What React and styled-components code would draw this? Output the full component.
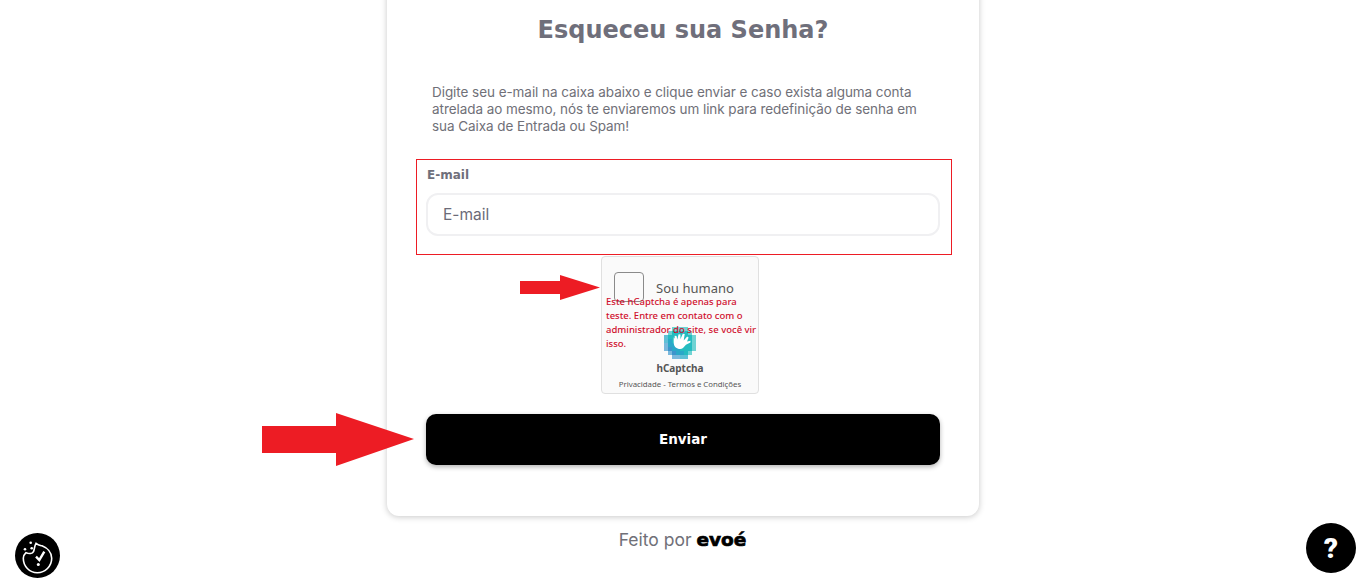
import React from "react";
import styled, { createGlobalStyle } from "styled-components";

const Global = createGlobalStyle`
  html, body { margin: 0; padding: 0; background: #fff; height: 580px; overflow: hidden; }
  * { box-sizing: border-box; }
`;
const Page = styled.div`
  position: relative; width: 1365px; height: 580px; overflow: hidden;
  display: flex; flex-direction: column; align-items: center;
  font-family: "Inter", "Liberation Sans", sans-serif; color: #6b6b76;
`;
const Card = styled.main`
  width: 592px; height: 536px; margin-top: -20px; margin-left: 1px; flex: none;
  background: #fff; border-radius: 12px;
  box-shadow: 0 1px 6px rgba(0,0,0,.22);
  padding: 32px 39px 0;
  display: flex; flex-direction: column; align-items: center;
`;
const Title = styled.h1`
  margin: 0; font-family: "DejaVu Sans", sans-serif; font-weight: 700; font-size: 24px;
  line-height: 36px; color: #6f6f7b; white-space: nowrap;
`;
const Intro = styled.p`
  margin: 36px 0 0 6px; width: 500px; align-self: flex-start;
  font-size: 13.5px; line-height: 17px; color: #707078; letter-spacing: -.06px;
`;
const FieldBox = styled.div`
  width: 536px; height: 96px; margin: 24px 0 0 2px; border: 1px solid #ed1c24;
  padding: 8px 10px 0 9px; flex: none;
`;
const Label = styled.label`
  display: block; margin-left: 1px; font-family: "DejaVu Sans", sans-serif; font-size: 12px; font-weight: 700;
  line-height: 14px; color: #6f6f7b;
`;
const Input = styled.input`
  display: block; width: 514px; height: 43px; margin-top: 11px; padding: 0 15px;
  border: 2px solid #f0f0f2; border-radius: 12px; background: #fff;
  font: 400 15.5px "Inter", sans-serif; outline: none;
  &::placeholder { color: #6b6b78; opacity: 1; }
`;
const Captcha = styled.div`
  position: relative; width: 158px; height: 138px; margin: 1px 0 0 -6px; flex: none;
  padding: 15px 12px 0;
  display: flex; flex-direction: column; align-items: center;
  background: #fafafa; border: 1px solid #e0e0e0; border-radius: 4px;
  font-family: "Noto Sans", sans-serif;
`;
const CheckRow = styled.div`
  align-self: stretch; display: flex; align-items: center; gap: 12px; height: 30px;
`;
const CheckBox = styled.span`
  width: 30px; height: 30px; flex: none;
  border: 1px solid #8a8a8a; border-radius: 4px; background: #fafafa;
`;
const Human = styled.span`
  padding-top: 2px; font-size: 13px; line-height: 18px; color: #555;
`;
const Warn = styled.p`
  position: absolute; left: 4px; top: 38px; width: 154px; margin: 0;
  font-size: 9.5px; font-weight: 500; line-height: 14px; color: #d0102e;
`;
const Logo = styled.svg`margin-top: 25px; display: block; flex: none;`;
const Brand = styled.span`
  margin-top: 2px; font-size: 10px; font-weight: 700; line-height: 14px; color: #555;
`;
const Legal = styled.span`
  margin-top: 4px; white-space: nowrap; font-size: 7.8px; line-height: 11px; color: #555;
`;
const Send = styled.button`
  width: 514px; height: 51px; margin-top: 20px; padding: 0 0 2px; flex: none; border: 0; border-radius: 10px;
  background: #000; color: #fff; font-family: "DejaVu Sans", sans-serif; font-weight: 700;
  font-size: 13.5px; box-shadow: 0 2px 5px rgba(0,0,0,.3);
`;
const Footer = styled.footer`
  margin-top: 13px; font-size: 17.5px; line-height: 22px; color: #707078;
`;
const Evoe = styled.b`
  font-family: "DejaVu Sans", sans-serif; font-weight: 700; color: #000; font-size: 18.5px;
  -webkit-text-stroke: .7px #000;
`;
const Arrow = styled.svg`position: absolute; left: ${p => p.$x}px; top: ${p => p.$y}px;`;
const Round = styled.button`
  position: fixed; border: 0; padding: 0; border-radius: 50%; background: #000; color: #fff;
  display: flex; align-items: center; justify-content: center;
  width: ${p => p.$s}px; height: ${p => p.$s}px;
`;
const CookieButton = styled(Round)`left: 15px; bottom: 2px;`;
const HelpButton = styled(Round)`right: 9px; bottom: 7px;`;
const Help = styled.span`font: 900 28px "Roboto", sans-serif;`;

const cells = [];
const rows = [[2,5],[1,6],[0,7],[0,7],[0,7],[0,7],[1,6],[2,5]];
rows.forEach(([a, b], y) => {
  for (let x = a; x <= b; x++) {
    const t = (x - y + 7) / 14;
    const edge = x === a || x === b || y === 0 || y === 7;
    const base = t > 0.42 ? (edge ? "#6fd3d3" : "#25bcc0") : t > 0.28 ? (edge ? "#5fc0d6" : "#2aa8c8") : (edge ? "#7ab8dc" : "#3d94cc");
    cells.push(<rect key={`${x}-${y}`} x={x * 4} y={y * 4} width="4.100" height="4.100" fill={base} shapeRendering="crispEdges" />);
  }
});

export default function App() {
  return (
    <>
      <Global />
      <Page>
        <Card>
          <Title>Esqueceu sua Senha?</Title>
          <Intro>
            Digite seu e-mail na caixa abaixo e clique enviar e caso exista alguma conta
            atrelada ao mesmo, nós te enviaremos um link para redefinição de senha em
            sua Caixa de Entrada ou Spam!
          </Intro>
          <FieldBox>
            <Label>E-mail</Label>
            <Input placeholder="E-mail" />
          </FieldBox>
          <Captcha>
            <CheckRow>
              <CheckBox />
              <Human>Sou humano</Human>
            </CheckRow>
            <Warn>Este hCaptcha é apenas para teste. Entre em contato com o administrador do site, se você vir isso.</Warn>
            <Logo width="32" height="32" viewBox="0 0 32 32">
              {cells}
              <g transform="rotate(32 16 16) translate(2.500 2.500) scale(.85)">
                <path d="M8 15l-2-3 2-1 3 3-2-6 2-1 3 5-1-7 2-1 3 7 1-6 2 0 1 5 3-3 1 2-3 5-1 5c-1 3-4 4-7 4-4 0-6-4-9-9z" fill="#fff" />
              </g>
            </Logo>
            <Brand>hCaptcha</Brand>
            <Legal>Privacidade - Termos e Condições</Legal>
          </Captcha>
          <Send>Enviar</Send>
        </Card>
        <Footer>Feito por <Evoe>evoé</Evoe></Footer>
        <Arrow $x={520} $y={275} width="80" height="25" viewBox="0 0 80 25">
          <path d="M0 6h40V0l40 12.500L40 25v-6H0z" fill="#ed1c24" />
        </Arrow>
        <Arrow $x={262} $y={412} width="152" height="55" viewBox="0 0 152 55">
          <path d="M0 14h74V1l78 26-78 27V41H0z" fill="#ed1c24" />
        </Arrow>
        <CookieButton $s={45} aria-label="Cookies">
          <svg width="45" height="45" viewBox="0 0 45 45" fill="none" stroke="#fff" strokeWidth="1.6">
            <path d="M21 10.300c2 2 3 2 6 2.500 5 2 9.700 6.500 9.700 12.500 0 8-6.500 14.400-14.400 14.400S8.300 33.300 8.300 25.300c0-2 1-4 2.700-5.600 3 1.200 6.500 1 7.500-1 1-2.500 1-6 2.500-8.400z" />
            <path d="M21 23.700l3.300 3.300 5-8.300" strokeWidth="2.400" />
            <circle cx="23.300" cy="31.500" r="1.500" fill="#fff" stroke="none" />
            <circle cx="15.700" cy="9.700" r="1.300" fill="#fff" stroke="none" />
            <circle cx="10" cy="16.300" r="1.300" fill="#fff" stroke="none" />
            <circle cx="16.700" cy="15.300" r="1.300" fill="#fff" stroke="none" />
          </svg>
        </CookieButton>
        <HelpButton $s={50} aria-label="Ajuda"><Help>?</Help></HelpButton>
      </Page>
    </>
  );
}
